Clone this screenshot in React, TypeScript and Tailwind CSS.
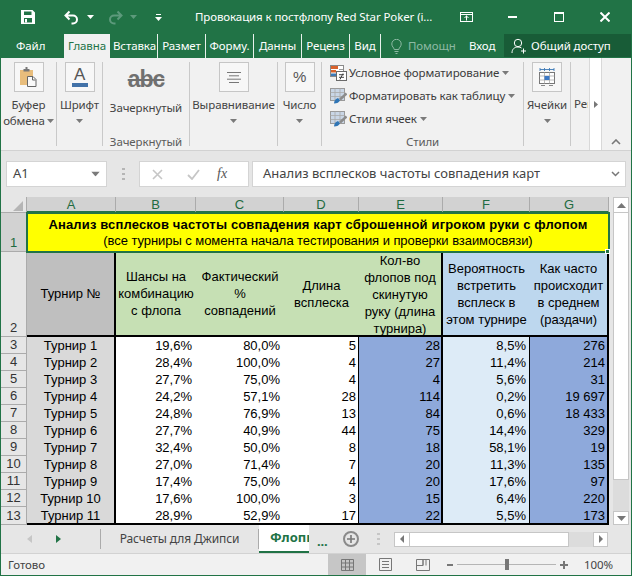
const ui = "font-['Noto_Sans','Open_Sans',sans-serif]";
const cellFont = "font-['Liberation_Sans',Arial,sans-serif]";

const rows = [
  ['Турнир 1', '19,6%', '80,0%', '5', '28', '8,5%', '276'],
  ['Турнир 2', '28,4%', '100,0%', '4', '27', '11,4%', '214'],
  ['Турнир 3', '27,7%', '75,0%', '4', '4', '5,6%', '31'],
  ['Турнир 4', '24,2%', '57,1%', '28', '114', '0,2%', '19 697'],
  ['Турнир 5', '24,8%', '76,9%', '13', '84', '0,6%', '18 433'],
  ['Турнир 6', '27,7%', '40,9%', '44', '75', '14,4%', '329'],
  ['Турнир 7', '32,4%', '50,0%', '8', '18', '58,1%', '19'],
  ['Турнир 8', '27,0%', '71,4%', '7', '20', '11,3%', '135'],
  ['Турнир 9', '17,4%', '75,0%', '4', '20', '17,6%', '97'],
  ['Турнир 10', '17,6%', '100,0%', '3', '15', '6,4%', '220'],
  ['Турнир 11', '28,9%', '52,9%', '17', '22', '5,5%', '173'],
];

function Caret({ className = '' }: { className?: string }) {
  return (
    <svg width="7" height="4" viewBox="0 0 7 4" className={className}>
      <path d="M0 0h7L3.5 4z" fill="#7a7a7a" />
    </svg>
  );
}

function IconBox({ children, className = '' }: { children: React.ReactNode; className?: string }) {
  return (
    <div className={`flex h-[30px] w-[30px] items-center justify-center border border-[#c6c6c6] bg-[#f7f7f7] ${className}`}>
      {children}
    </div>
  );
}

function RibbonTab({ label, width, active = false }: { label: string; width: number; active?: boolean }) {
  return (
    <div
      className={`flex h-6 shrink-0 items-center overflow-hidden whitespace-nowrap ${
        active ? 'bg-[#f1f1f1] text-[#217346]' : 'text-white'
      }`}
      style={{ width }}
    >
      <span className="block w-full overflow-hidden px-[3px] text-center">{label}</span>
    </div>
  );
}

function TabSep() {
  return <div className="h-[24px] w-px shrink-0 bg-[#e8f1ec]" />;
}

function Group({ width, label, children }: { width: number; label?: string; children: React.ReactNode }) {
  return (
    <div className="relative flex h-[84px] shrink-0 flex-col items-center border-r border-[#c9c9c9]" style={{ width }}>
      {children}
      {label ? <div className="absolute bottom-[-4px] leading-4 text-[#5c5c5c]">{label}</div> : null}
    </div>
  );
}

function TableIcon({ cond = false }: { cond?: boolean }) {
  if (cond) {
    return (
      <svg width="17" height="16" viewBox="0 0 17 16">
        <rect x="0.5" y="0.5" width="13" height="11" fill="#fff" stroke="#8a8a8a" />
        <rect x="1" y="1" width="7" height="3" fill="#d9622b" />
        <rect x="1" y="5" width="5" height="2.5" fill="#d9622b" />
        <rect x="1" y="8.5" width="7" height="2.5" fill="#3d7ab8" />
        <path d="M9 4.5h4M9 7.5h4" stroke="#9a9a9a" />
        <rect x="6.5" y="6.5" width="10" height="9" fill="#fff" stroke="#6a6a6a" />
        <path d="M9 9.7h5M9 12.3h5M13 8.5l-3 6" stroke="#444" />
      </svg>
    );
  }
  return (
    <svg width="17" height="16" viewBox="0 0 17 16">
      <rect x="0.5" y="0.5" width="14" height="12" fill="#fff" stroke="#9a9a9a" />
      <rect x="1" y="1" width="13" height="11" fill="#c9d6e6" />
      <path d="M0.5 4.5h14M0.5 8.5h14M5 0.5v12M10 0.5v12" stroke="#a9a9a9" strokeWidth="0.8" />
      <path d="M16.5 5.5 L10 11.5" stroke="#8b8b8b" strokeWidth="2.4" />
      <path d="M4 15.5c0-3 2-5 4-5.5l2 2.2c-.6 2-3 3.3-6 3.3z" fill="#2f75b5" />
    </svg>
  );
}

function StyleRow({ icon, label }: { icon: React.ReactNode; label: string }) {
  return (
    <div className="flex h-[23px] items-center whitespace-nowrap text-[#3c3c3c]">
      <div className="flex w-[19px] shrink-0 items-center">{icon}</div>
      <span>{label}</span>
      <Caret className="ml-[3px]" />
    </div>
  );
}

function ColHead({ label }: { label: string }) {
  return (
    <div className="flex items-center justify-center border-b-2 border-r border-[#217346] border-r-[#ababab] bg-[#d2d2d2] text-[13px] leading-none text-[#1f6b41]">
      {label}
    </div>
  );
}

function RowHead({ n, selected = false }: { n: number; selected?: boolean }) {
  return (
    <div
      className={`flex items-end justify-center border-b border-r border-[#ababab] text-[13px] leading-[16px] ${
        selected ? 'bg-[#d2d2d2] text-[#1f6b41]' : 'bg-[#e6e6e6] text-[#333]'
      }`}
    >
      {n}
    </div>
  );
}

function HeadCell({ children, className }: { children: React.ReactNode; className: string }) {
  return (
    <div className={`flex items-center justify-center overflow-hidden border-b-2 border-black text-center text-[13px] leading-[17px] text-black ${className}`}>
      <div>{children}</div>
    </div>
  );
}

export default function App() {
  return (
    <div className={`flex h-[576px] w-[632px] flex-col overflow-hidden border-x border-b border-[#217346] bg-[#e6e6e6] text-[11.5px] tracking-[-0.1px] ${ui}`}>
      {/* title bar */}
      <div className="flex h-[34px] shrink-0 items-center bg-[#217346] text-white">
        <svg width="14" height="14" viewBox="0 0 14 14" className="ml-5 shrink-0">
          <path fillRule="evenodd" fill="#fff" d="M0 0h11.5L14 2.5V14H0zM3 1.5V5h7.5V1.5zM3 8v4.5h8V8z" />
          <rect x="4" y="9" width="2" height="3.5" fill="#fff" />
        </svg>
        <svg width="15" height="15" viewBox="0 0 15 15" className="ml-[29px] shrink-0">
          <path d="M5.5 1.5 1.5 5.5l4 4M1.5 5.5H9a4 4 0 0 1 0 8H7.5" fill="none" stroke="#fff" strokeWidth="2" />
        </svg>
        <Caret className="ml-2 [&_path]:fill-white" />
        <svg width="15" height="15" viewBox="0 0 15 15" className="ml-[14px] shrink-0">
          <path d="M9.5 1.5l4 4-4 4M13.5 5.5H6a4 4 0 0 0 0 8h1.5" fill="none" stroke="#5d9a7c" strokeWidth="2" />
        </svg>
        <Caret className="ml-[7px] [&_path]:fill-[#5d9a7c]" />
        <svg width="7" height="7" viewBox="0 0 7 7" className="ml-[18px] shrink-0">
          <path d="M1 .5h5" stroke="#fff" />
          <path d="M0 3h7L3.5 7z" fill="#fff" />
        </svg>
        <div className="ml-[33px] w-[247px] shrink-0 whitespace-nowrap">Провокация к постфлопу Red Star Poker (i...</div>
        <svg width="13" height="10" viewBox="0 0 13 10" className="ml-[18px] shrink-0">
          <rect x="0.5" y="0.5" width="12" height="9" fill="none" stroke="#fff" />
          <path d="M0 2.5h13" stroke="#fff" />
          <path d="M6.5 3.5v5M4.5 6l2-2 2 2" fill="none" stroke="#fff" />
        </svg>
        <div className="ml-[35px] h-0.5 w-[9px] shrink-0 bg-white" />
        <div className="ml-[37px] h-[10px] w-[10px] shrink-0 border border-t-2 border-white" />
        <svg width="10" height="10" viewBox="0 0 10 10" className="ml-[36px] shrink-0">
          <path d="M.5.5l9 9M9.5.5l-9 9" stroke="#fff" strokeWidth="2" />
        </svg>
      </div>

      {/* tabs */}
      <div className="flex h-6 shrink-0 items-center bg-[#217346] text-white">
        <div className="w-[63px] shrink-0 pl-[15px]">Файл</div>
        <RibbonTab label="Главна" width={46} active />
        <RibbonTab label="Вставка" width={47} />
        <TabSep />
        <RibbonTab label="Размет" width={47} />
        <TabSep />
        <RibbonTab label="Форму." width={47} />
        <TabSep />
        <RibbonTab label="Данны" width={47} />
        <TabSep />
        <RibbonTab label="Реценз" width={47} />
        <TabSep />
        <RibbonTab label="Вид" width={30} />
        <TabSep />
        <svg width="11" height="15" viewBox="0 0 11 15" className="ml-[10px] shrink-0">
          <path d="M3.2 10.5C3 8.5.8 7.8.8 5a4.7 4.7 0 0 1 9.4 0c0 2.8-2.2 3.500-2.400 5.500zM3.500 12.500h4M4.500 14.500h2" fill="none" stroke="#8db9a3" />
        </svg>
        <div className="ml-[6px] w-[61px] shrink-0 text-[#8db9a3]">Помощн</div>
        <div className="w-[35px] shrink-0">Вход</div>
        <div className="flex h-[23px] flex-1 items-center self-start bg-[#185c37]">
          <svg width="16" height="16" viewBox="0 0 16 16" className="ml-[7px] shrink-0">
            <circle cx="7" cy="5" r="3.7" fill="none" stroke="#fff" />
            <path d="M1 15c0-4 2.500-6 6-6 1.500 0 2.500.4 3.500 1M12.500 10.500v5M10 13h5" fill="none" stroke="#fff" />
          </svg>
          <span className="ml-1 whitespace-nowrap">Общий доступ</span>
        </div>
      </div>

      {/* ribbon */}
      <div className="relative flex h-[93px] shrink-0 border-b border-[#d2d2d2] bg-[#f1f1f1] pt-1 leading-4 text-[#444]">
        <Group width={56}>
          <IconBox>
            <svg width="18" height="20" viewBox="0 0 18 20">
              <rect x="0" y="3" width="13" height="15" fill="#e8bd7c" />
              <rect x="3.500" y="2" width="6" height="2.500" fill="#777" />
              <rect x="5.500" y="0" width="2" height="3" fill="#777" />
              <path d="M7.500 9.500h5.500l3 3v7h-8.500z" fill="#fafafa" stroke="#666" />
              <path d="M12.500 10v3h3" fill="none" stroke="#666" />
            </svg>
          </IconBox>
          <div className="mt-[5px] text-center leading-[16px]">Буфер</div>
          <div className="flex items-center gap-[2px] leading-[16px]">
            обмена
            <Caret />
          </div>
        </Group>
        <Group width={46}>
          <IconBox>
            <div className="flex flex-col items-center">
              <span className="font-['Liberation_Sans',sans-serif] text-[17px] leading-[14px] text-[#555]">A</span>
              <div className="mt-[1px] h-1 w-4 bg-[#4272a8]" />
            </div>
          </IconBox>
          <div className="mt-[5px] leading-[16px]">Шрифт</div>
          <Caret className="mt-[6px]" />
        </Group>
        <Group width={87} label="Зачеркнутый">
          <div className="mt-[4px] h-[26px] font-['Liberation_Sans',sans-serif] text-[23px] font-bold leading-[26px] tracking-[-1px] text-[#707070] line-through">abc</div>
          <div className="mt-[8px] whitespace-nowrap leading-[16px]">Зачеркнутый</div>
        </Group>
        <Group width={88}>
          <IconBox>
            <svg width="14" height="11" viewBox="0 0 14 11">
              <path d="M0 .5h14M2 3.800h10M0 7.200h14M2 10.500h10" stroke="#777" />
            </svg>
          </IconBox>
          <div className="mt-[5px] whitespace-nowrap leading-[16px]">Выравнивание</div>
          <Caret className="mt-[6px]" />
        </Group>
        <Group width={44}>
          <IconBox>
            <span className="font-['Liberation_Sans',sans-serif] text-[15px] text-[#555]">%</span>
          </IconBox>
          <div className="mt-[5px] leading-[16px]">Число</div>
          <Caret className="mt-[6px]" />
        </Group>
        <Group width={202} label="Стили">
          <div className="mt-[-1px] w-full pl-[8px]">
            <StyleRow icon={<TableIcon cond />} label="Условное форматирование" />
            <StyleRow icon={<TableIcon />} label="Форматировать как таблицу" />
            <StyleRow icon={<TableIcon />} label="Стили ячеек" />
          </div>
        </Group>
        <Group width={47}>
          <IconBox>
            <svg width="16" height="18" viewBox="0 0 16 18">
              <path d="M1 1.500h14M1 0v3M15 0v3M5.500 0v3M10.500 0v3" stroke="#3b78b5" strokeWidth="0.9" />
              <rect x="0.500" y="4.500" width="15" height="11" fill="#fff" stroke="#777" />
              <path d="M.5 8h15M.5 12h15M5.500 4.500v11M10.500 4.500v11" stroke="#aaa" strokeWidth="0.8" />
              <rect x="5.500" y="8" width="5" height="4" fill="#3b78c5" />
              <path d="M2 17.500h4M10 17.500h4" stroke="#888" />
            </svg>
          </IconBox>
          <div className="mt-[5px] leading-[16px]">Ячейки</div>
          <Caret className="mt-[6px]" />
        </Group>
        <div className="mt-[34px] w-[17px] overflow-hidden whitespace-nowrap pl-[3px] leading-[16px]">Рец</div>
        <div className="absolute left-[588px] top-0 flex h-[92px] w-[13px] items-center justify-center border-x border-[#d8d8d8] bg-white">
          <svg width="4" height="7" viewBox="0 0 4 7">
            <path d="M0 0l4 3.500L0 7z" fill="#777" />
          </svg>
        </div>
        <svg width="10" height="6" viewBox="0 0 10 6" className="absolute left-[610px] top-[81px]">
          <path d="M1 5l4-4 4 4" fill="none" stroke="#777" strokeWidth="1.600" />
        </svg>
      </div>

      {/* formula bar */}
      <div className="mt-[10px] flex h-[26px] shrink-0 items-stretch text-[13px] tracking-normal">
        <div className="ml-[5px] flex w-[101px] items-center justify-between border border-[#d4d4d4] bg-white pl-[6px] pr-[7px] text-[#444]">
          A1
          <Caret className="scale-125" />
        </div>
        <div className="ml-[15px] flex w-[3px] flex-col justify-center gap-[3px]">
          <div className="h-[2px] bg-[#b5b5b5]" />
          <div className="h-[2px] bg-[#b5b5b5]" />
          <div className="h-[2px] bg-[#b5b5b5]" />
        </div>
        <div className="ml-[14px] flex w-[110px] items-center border border-[#d4d4d4] bg-white">
          <svg width="11" height="11" viewBox="0 0 11 11" className="ml-[12px]">
            <path d="M1 1l9 9M10 1l-9 9" stroke="#c6c6c6" strokeWidth="1.600" />
          </svg>
          <svg width="13" height="11" viewBox="0 0 13 11" className="ml-[24px]">
            <path d="M1 6l4 4 7-9" fill="none" stroke="#c6c6c6" strokeWidth="1.800" />
          </svg>
          <span className="ml-[17px] font-['Liberation_Serif',serif] text-[14px] italic leading-none text-[#555]">fx</span>
        </div>
        <div className="ml-[3px] flex w-[374px] items-center justify-between border border-[#d4d4d4] bg-white pl-[10px] pr-[5px] text-[#444]">
          Анализ всплесков частоты совпадения карт
          <svg width="9" height="6" viewBox="0 0 9 6">
            <path d="M1 1l3.500 3.500L8 1" fill="none" stroke="#777" strokeWidth="1.500" />
          </svg>
        </div>
      </div>

      {/* sheet */}
      <div className="mt-[10px] flex h-[328px] shrink-0 tracking-normal">
        <div
          className={`grid w-[608px] shrink-0 grid-cols-[26px_89px_80px_88px_75px_84px_87px_79px] grid-rows-[16px_39px_85px_repeat(10,17px)_18px] ${cellFont}`}
        >
          <div className="relative border-b border-r border-[#ababab] bg-[#e6e6e6]">
            <svg width="10" height="10" viewBox="0 0 10 10" className="absolute bottom-[1px] right-[3px]">
              <path d="M10 0v10H0z" fill="#b5b5b5" />
            </svg>
          </div>
          {['A', 'B', 'C', 'D', 'E', 'F', 'G'].map((c) => (
            <ColHead key={c} label={c} />
          ))}

          <RowHead n={1} selected />
          <div className="relative z-10 col-span-7 flex flex-col items-center justify-center bg-[#ffff00] text-[13px] leading-[16px] text-black outline-2 -outline-offset-1 outline-[#217346]">
            <div className="whitespace-nowrap font-bold tracking-[0.15px]">Анализ всплесков частоты совпадения карт сброшенной игроком руки с флопом</div>
            <div className="whitespace-nowrap tracking-[-0.06px]">(все турниры с момента начала тестирования и проверки взаимосвязи)</div>
            <div className="absolute bottom-[-2px] right-[-1px] h-[5px] w-[5px] border border-white bg-[#217346]" />
          </div>

          <RowHead n={2} />
          <HeadCell className="border-r-2 bg-[#bfbfbf]">Турнир №</HeadCell>
          <HeadCell className="bg-[#c6e0b4]">
            Шансы на
            <br />
            комбинацию
            <br />с флопа
          </HeadCell>
          <HeadCell className="bg-[#c6e0b4]">
            Фактический
            <br />%<br />
            совпадений
          </HeadCell>
          <HeadCell className="bg-[#c6e0b4]">
            Длина
            <br />
            всплеска
          </HeadCell>
          <HeadCell className="border-r-2 bg-[#c6e0b4]">
            <div className="mt-[2px]">
              Кол-во
              <br />
              флопов под
              <br />
              скинутую
              <br />
              руку (длина
              <br />
              турнира)
            </div>
          </HeadCell>
          <HeadCell className="bg-[#bdd7ee]">
            Вероятность
            <br />
            встретить
            <br />
            всплеск в
            <br />
            этом турнире
          </HeadCell>
          <HeadCell className="border-r-2 bg-[#bdd7ee]">
            Как часто
            <br />
            происходит
            <br />в среднем
            <br />
            (раздачи)
          </HeadCell>

          {rows.map((r, i) => {
            const last = i === rows.length - 1;
            const edge = last ? 'border-b-2 border-black' : '';
            const cell = `flex items-start justify-end text-[13px] leading-[18px] text-black ${edge}`;
            return (
              <div key={r[0]} className="contents">
                <RowHead n={i + 3} />
                <div className={`flex items-start justify-center border-r-2 border-black bg-[#d9d9d9] text-[13px] leading-[18px] text-black ${edge}`}>{r[0]}</div>
                <div className={`${cell} bg-white pr-1`}>{r[1]}</div>
                <div className={`${cell} bg-white pr-1`}>{r[2]}</div>
                <div className={`${cell} border-r border-r-black bg-white pr-[2px]`}>{r[3]}</div>
                <div className={`${cell} border-r-2 border-r-black bg-[#8ea9db] pr-[1px]`}>{r[4]}</div>
                <div className={`${cell} border-r border-r-black bg-[#ddebf7] pr-[3px]`}>{r[5]}</div>
                <div className={`${cell} border-r-2 border-r-black bg-[#8ea9db] pr-[2px]`}>{r[6]}</div>
              </div>
            );
          })}
        </div>
        <div className="ml-[4px] flex w-[16px] shrink-0 flex-col bg-[#dcdcdc]">
          <div className="flex h-4 items-center justify-center border border-[#c6c6c6] bg-white">
            <svg width="9" height="5" viewBox="0 0 9 5">
              <path d="M4.500 0L9 5H0z" fill="#777" />
            </svg>
          </div>
          <div className="h-[267px] border-x border-b border-[#c6c6c6] bg-white" />
          <div className="flex-1" />
          <div className="flex h-[14px] items-center justify-center border border-[#c6c6c6] bg-white">
            <svg width="9" height="5" viewBox="0 0 9 5">
              <path d="M0 0h9L4.500 5z" fill="#777" />
            </svg>
          </div>
        </div>
      </div>

      {/* sheet tabs */}
      <div className="flex h-[28px] shrink-0 items-center bg-[#e6e6e6] text-[#444]">
        <svg width="5" height="8" viewBox="0 0 5 8" className="ml-[26px] shrink-0">
          <path d="M5 0v8L0 4z" fill="#c6c6c6" />
        </svg>
        <svg width="5" height="8" viewBox="0 0 5 8" className="ml-[24px] shrink-0">
          <path d="M0 0v8l5-4z" fill="#217346" />
        </svg>
        <div className="ml-[39px] h-5 w-px shrink-0 bg-[#ababab]" />
        <div className="flex h-5 w-[158px] shrink-0 items-center justify-center whitespace-nowrap border-r border-[#ababab] text-[12px]">Расчеты для Джипси</div>
        <div className="h-full w-[50px] shrink-0 self-start overflow-hidden whitespace-nowrap border-b-2 border-[#217346] bg-white pl-[11px] pt-[3px] text-[13px] font-bold tracking-normal text-[#217346]">
          Флопы
        </div>
        <div className="ml-[8px] w-[11px] shrink-0 pt-[4px] text-[13px] font-bold leading-none text-[#217346]">...</div>
        <div className="ml-[15px] flex h-4 w-4 shrink-0 items-center justify-center rounded-full border-2 border-[#8a8a8a]">
          <svg width="8" height="8" viewBox="0 0 8 8">
            <path d="M4 0v8M0 4h8" stroke="#777" strokeWidth="1.600" />
          </svg>
        </div>
        <div className="ml-[18px] flex w-[3px] shrink-0 flex-col gap-[3px]">
          <div className="h-[2px] bg-[#c6c6c6]" />
          <div className="h-[2px] bg-[#c6c6c6]" />
          <div className="h-[2px] bg-[#c6c6c6]" />
        </div>
        <div className="ml-[14px] flex h-[15px] w-[214px] shrink-0 bg-[#dcdcdc]">
          <div className="flex w-4 items-center justify-center border border-[#c6c6c6] bg-white">
            <svg width="4" height="8" viewBox="0 0 4 8">
              <path d="M4 0v8L0 4z" fill="#777" />
            </svg>
          </div>
          <div className="w-[159px] border-y border-r border-[#c6c6c6] bg-white" />
          <div className="flex-1" />
          <div className="flex w-[15px] items-center justify-center border border-[#c6c6c6] bg-white">
            <svg width="4" height="8" viewBox="0 0 4 8">
              <path d="M0 0v8l4-4z" fill="#777" />
            </svg>
          </div>
        </div>
      </div>

      {/* status bar */}
      <div className="flex flex-1 items-center border-t border-[#d2d2d2] bg-[#f1f1f1] text-[#444]">
        <div className="ml-[7px] w-[320px] shrink-0">Готово</div>
        <div className="flex h-full w-[38px] shrink-0 items-center justify-center bg-[#c6c6c6]">
          <svg width="13" height="12" viewBox="0 0 13 12">
            <path d="M.5.500h12v11H.5zM.5 4h12M.5 8h12M4.500.500v11M8.500.500v11" fill="none" stroke="#777" />
          </svg>
        </div>
        <svg width="13" height="13" viewBox="0 0 13 13" className="ml-[13px] shrink-0">
          <path d="M.5.500h12v12H.5zM3 3.500h7M3 6.500h7M3 9.500h7" fill="none" stroke="#777" />
        </svg>
        <svg width="14" height="12" viewBox="0 0 14 12" className="ml-[24px] shrink-0">
          <path d="M.5.500h13v11H.5zM.5 6.500h6.500V.500M7 .500v6M10 .500v6" fill="none" stroke="#777" />
        </svg>
        <div className="ml-[17px] h-0.5 w-[6px] shrink-0 bg-[#777]" />
        <div className="relative ml-1 h-px w-[99px] shrink-0 bg-[#b5b5b5]">
          <div className="absolute left-[48px] top-[-5px] h-[11px] w-1 bg-[#777]" />
        </div>
        <svg width="8" height="8" viewBox="0 0 8 8" className="ml-1 shrink-0">
          <path d="M4 0v8M0 4h8" stroke="#777" strokeWidth="2" />
        </svg>
        <div className="ml-[16px] whitespace-nowrap">100%</div>
      </div>
    </div>
  );
}
